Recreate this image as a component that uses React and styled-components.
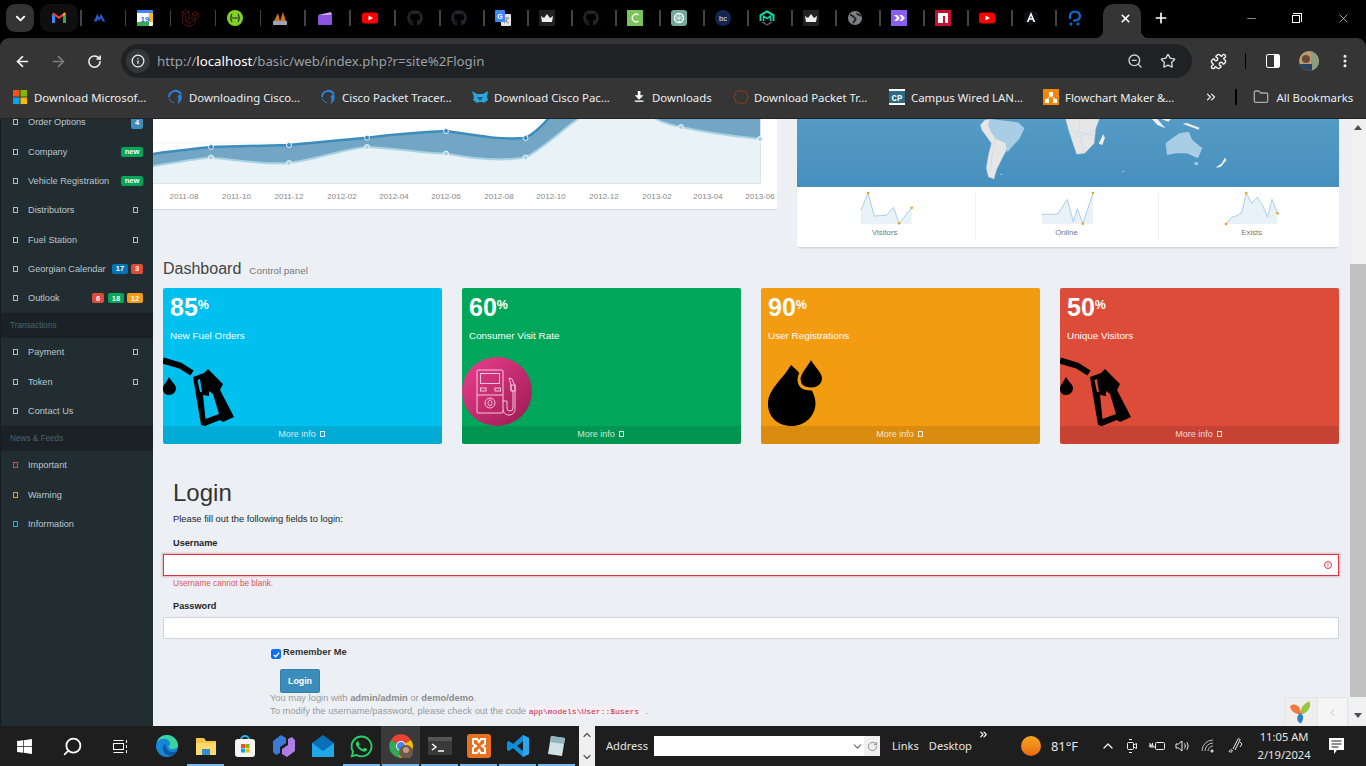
import React from "react";
import styled, { createGlobalStyle } from "styled-components";
import { ArrowLeft, ArrowRight, RotateCw, Info, ZoomOut, Star, Puzzle, MoreVertical, Minus, X, Plus, ChevronDown, ChevronUp, ChevronsRight, Folder, Search, ChevronLeft } from "lucide-react";
import { FaGithub, FaWhatsapp, FaWindows } from "react-icons/fa";
import { SiLaravel } from "react-icons/si";

const Global = createGlobalStyle`
  html, body { margin: 0; padding: 0; overflow: hidden; background: #000; }
  * { box-sizing: border-box; }
`;
const UI = `"Noto Sans", "Open Sans", sans-serif`;
const WEB = `"Liberation Sans", Arial, sans-serif`;

const Shell = styled.div`
  width: 1366px; height: 766px; display: grid; overflow: hidden;
  grid-template-columns: 1366px;
  grid-template-rows: 38px 40px 41px 607px 40px; background: #000;
`;
/* ---------- tab strip ---------- */
const TabStrip = styled.div`display: flex; align-items: flex-start; padding: 4px 0 0 6px; background: #000;`;
const TabSearch = styled.div`
  width: 28px; height: 28px; border-radius: 9px; background: #333; color: #fff;
  display: flex; align-items: center; justify-content: center;
`;
const PinnedTab = styled.div`
  position: relative; height: 28px; flex: none; width: ${p => p.$wide ? "44.9px" : "44px"};
  display: flex; align-items: center; justify-content: center;
  &::before { content: ""; position: absolute; left: 2px; top: 6px; width: 1.5px; height: 16px; background: #444; }
`;
const GmailPlate = styled.div`
  width: 38px; height: 28px; border-radius: 9px; background: #0f0f0f; margin-left: 6px;
  display: flex; align-items: center; justify-content: center;
`;
const ActiveTab = styled.div`
  position: relative; width: 38px; height: 34px; margin-left: 6px; border-radius: 10px 10px 0 0; background: #353535; color: #fff;
  display: flex; align-items: center; justify-content: center; padding: 0 0 6px 6px;
  &::before, &::after { content: ""; position: absolute; bottom: 0; width: 8px; height: 8px; }
  &::before { left: -8px; background: radial-gradient(circle at 0 0, #000 8px, #353535 8.5px); }
  &::after { right: -8px; background: radial-gradient(circle at 100% 0, #000 8px, #353535 8.5px); }
`;
const NewTab = styled.div`width: 40px; height: 28px; color: #fff; display: flex; align-items: center; justify-content: center;`;
const WindowControls = styled.div`display: flex; margin-left: auto; color: #fff;`;
const WinBtn = styled.div`width: 46px; height: 28px; display: flex; align-items: center; justify-content: center;`;
const RestoreGlyph = styled.div`
  position: relative; width: 8px; height: 8px; border: 1px solid #fff; margin-top: 2px; margin-right: 2px;
  &::after { content: ""; position: absolute; top: -3px; right: -3px; width: 8px; height: 8px; border-top: 1px solid #fff; border-right: 1px solid #fff; }
`;
/* ---------- toolbar ---------- */
const Toolbar = styled.div`display: flex; align-items: flex-start; padding: 6px 0 0 4px; background: #353535; border-radius: 9px 9px 0 0;`;
const NavBtn = styled.div`
  width: 36px; height: 34px; flex: none; display: flex; align-items: center; justify-content: center;
  color: ${p => p.$dim ? "#7c7c7c" : "#f1f1f1"};
`;
const Omnibox = styled.div`
  width: 1071px; height: 34px; margin: 0 8px 0 9px; border-radius: 17px; background: #202124;
  display: flex; align-items: center; padding: 0 6px 0 5px; flex: none;
`;
const InfoBubble = styled.div`width: 24px; height: 24px; border-radius: 50%; background: #35363a; color: #f1f1f1; display: flex; align-items: center; justify-content: center;`;
const Url = styled.div`margin-left: 7px; font: 13.25px ${UI}; color: #9aa0a6; white-space: nowrap; b { font-weight: 400; color: #fff; }`;
const OmniIcons = styled.div`margin-left: auto; display: flex; align-items: center; gap: 17px; color: #d7d7d7; padding-right: 10px;`;
const ToolSep = styled.div`width: 1px; height: 16px; background: #000; margin: 9px 9px 0 9px; flex: none;`;
const PanelGlyph = styled.div`
  width: 14px; height: 14px; border: 1.5px solid #fff; border-radius: 2px;
  background: linear-gradient(90deg, transparent 55%, #fff 55%);
`;
/* ---------- bookmarks ---------- */
const Bookmarks = styled.div`display: flex; align-items: center; background: #353535; padding: 0 0 2px 12px; border-bottom: 1px solid #222;`;
const Bookmark = styled.div`
  display: flex; align-items: center; flex: none; gap: ${p => p.$gap ?? 6}px; width: ${p => p.$w}px;
  font: 11.4px ${UI}; color: #eceff1; white-space: nowrap;
`;
const BookmarkIcon = styled.span`display: inline-flex; width: 16px; height: 16px; flex: none; align-items: center; justify-content: center; color: #fff;`;
const BarOverflow = styled.div`width: 31px; flex: none; margin-left: 11px; color: #eee; display: flex; align-items: center;`;
const BarSep = styled.div`width: 1.5px; height: 16px; background: #000; flex: none; margin-right: 16px;`;
/* ---------- page ---------- */
const Viewport = styled.div`display: flex; position: relative; overflow: hidden; background: #ecf0f5; font-family: ${WEB};`;
const Sidebar = styled.nav`width: 153px; flex: none; background: #222d32; border-left: 1px solid #161c20; overflow: hidden;`;
const SideList = styled.div`margin-top: -11.3px;`;
const SideRow = styled.div`
  height: 29.3px; display: flex; align-items: center; padding: 0 10px 0 12px; color: #b8c7ce; font-size: 9.2px; white-space: nowrap;
`;
const SideLabel = styled.span`margin-left: 10px; margin-right: auto;`;
const SideHead = styled.div`
  height: 25px; background: #1a2226; color: #4b646f; font-size: 8.2px; padding-left: 9px; display: flex; align-items: center;
`;
const Tofu = styled.span`
  display: inline-block; flex: none; width: 5px; height: 6px; border: 1px solid ${p => p.$c || "#aebcc3"};
  margin: ${p => p.$m || 0};
`;
const Badge = styled.span`
  flex: none; margin-left: ${p => p.$gap ?? 3}px; min-width: ${p => p.$w || 12}px; height: ${p => p.$h || 10}px; border-radius: 2px; background: ${p => p.$c};
  color: #fff; font-size: 7.5px; font-weight: 700; display: inline-flex; align-items: center; justify-content: center;
`;
const Main = styled.main`flex: 1; min-width: 0; display: flex; flex-direction: column;`;
const TopRow = styled.div`display: grid; grid-template-columns: 624px 542px; column-gap: 20px; height: 128px; align-items: start;`;
const ChartCard = styled.div`height: 91px; background: #fff; border-bottom: 1px solid #d2d6de; svg { display: block; }`;
const MapCard = styled.div`height: 129px; background: #fff; border-radius: 0 0 3px 3px; border-bottom: 1px solid #d2d6de; overflow: hidden; box-shadow: 0 1px 1px rgba(0,0,0,.05);`;
const MapArea = styled.div`height: 68px; background: linear-gradient(#549bc6, #478fbe); svg { display: block; }`;
const Sparks = styled.div`display: grid; grid-template-columns: 178.5px 183px 1fr; padding-top: 6px;`;
const SparkCell = styled.div`
  height: 47px; display: flex; flex-direction: column; align-items: center;
  padding: 0 ${p => p.$pr || 0}px 0 ${p => p.$pl || 0}px;
  border-right: ${p => p.$last ? "none" : "1px solid #f1f1f1"};
  svg { display: block; overflow: visible; margin-left: ${p => p.$off || 0}px; }
`;
const SparkLabel = styled.div`margin-top: 4px; font-size: 7.8px; color: #777; line-height: 9px;`;
const Heading = styled.div`height: 41px; padding: 13px 0 0 10px; display: flex; align-items: baseline; gap: 8px;`;
const Title = styled.h1`margin: 0; font-size: 16px; font-weight: 400; color: #444; line-height: 18px;`;
const Sub = styled.small`font-size: 9.9px; color: #777;`;
const Boxes = styled.div`display: grid; grid-template-columns: repeat(4, 279px); column-gap: 20px; margin-left: 10px;`;
const Box = styled.div`
  height: 156px; background: ${p => p.$c}; border-radius: 2px; color: #fff; display: flex; flex-direction: column;
`;
const BoxBody = styled.div`flex: 1; position: relative; padding: 5px 7px 0; overflow: hidden;`;
const BoxNum = styled.div`font-size: 25px; font-weight: 700; line-height: 28px; sup { font-size: 12.5px; font-weight: 700; vertical-align: 7px; line-height: 0; }`;
const BoxText = styled.div`font-size: 9.9px; margin-top: 9px; line-height: 12px;`;
const BoxIcon = styled.div`position: absolute; left: ${p => p.$l || 0}px; bottom: 0; line-height: 0;`;
const BoxFoot = styled.div`
  height: 18px; background: rgba(0,0,0,.1); color: rgba(255,255,255,.8); font-size: 9px; padding: 0 2px 2px 0;
  display: flex; align-items: center; justify-content: center; gap: 4px; border-radius: 0 0 2px 2px;
`;
const LoginWrap = styled.section`margin: 34px 11px 0 10px; color: #212529;`;
const LoginTitle = styled.h2`margin: 0 0 0 10px; font-size: 24px; font-weight: 400; line-height: 30px; color: #333;`;
const Lead = styled.p`margin: 5px 0 0 10px; font-size: 9.35px; line-height: 12px;`;
const FieldLabel = styled.label`display: block; margin: ${p => p.$top}px 0 5px 10px; font-size: 9.2px; font-weight: 700; line-height: 12px;`;
const Input = styled.div`
  position: relative; height: 22px; background: #fff; display: flex; align-items: center; justify-content: flex-end; padding-right: 6px;
  border: 1px solid ${p => p.$err ? "#dc3545" : "#ced4da"};
  box-shadow: ${p => p.$err ? "0 0 0 1.5px rgba(220,53,69,.22)" : "none"};
`;
const ErrDot = styled.span`
  width: 8px; height: 8px; border-radius: 50%; border: 1px solid #dc3545; color: #dc3545; font-size: 6px; font-weight: 700;
  display: flex; align-items: center; justify-content: center; line-height: 1;
`;
const ErrText = styled.div`margin: 3px 0 0 10px; font-size: 8.2px; line-height: 10px; color: #dc3545; opacity: .85;`;
const Remember = styled.div`margin: 8px 0 0 108px; display: flex; align-items: flex-start; gap: 2px; font-size: 9.3px; font-weight: 700; color: #333; line-height: 10px;`;
const Check = styled.span`
  width: 10px; height: 10px; margin-top: 2px; border-radius: 2px; background: #0d6efd; color: #fff; display: inline-flex; align-items: center; justify-content: center; flex: none;
`;
const LoginBtn = styled.div`
  margin: 10px 0 0 117px; width: 40px; height: 24px; background: #3c8dbc; border: 1px solid #367fa9; border-radius: 2px; color: #fff;
  font-size: 8.8px; font-weight: 700; display: flex; align-items: center; justify-content: center;
`;
const Hint = styled.div`margin: -1px 0 0 107px; color: #999; font-size: 9.35px; line-height: 13px; b { font-weight: 700; color: #8b8b8b; }`;
const Code = styled.code`
  background: #f5eef2; color: #c7254e; font: 8px "Liberation Mono", monospace; padding: 1px 2px; border-radius: 2px; margin: 0 2px 0 -2px;
`;
const ScrollBar = styled.div`
  width: 16px; flex: none; background: #f1f1f1; display: flex; flex-direction: column; align-items: center; position: relative;
`;
const ArrowUp = styled.div`margin-top: 6px; width: 0; height: 0; border: 4px solid transparent; border-top: 0; border-bottom: 5px solid #505050;`;
const Thumb = styled.div`width: 16px; height: 433px; margin-top: 134px; background: #c1c1c1;`;
const ArrowDown = styled.div`margin-top: 16px; width: 0; height: 0; border: 4px solid transparent; border-bottom: 0; border-top: 5px solid #505050;`;
const YiiBar = styled.div`
  position: absolute; right: 18px; bottom: 0; height: 29px; display: flex; background: #f5f5f5; border: 1px solid #e4e4e4; border-bottom: 0;
`;
const YiiLogo = styled.div`width: 32px; display: flex; align-items: center; justify-content: center; background: #eee;`;
const YiiToggle = styled.div`width: 30px; display: flex; align-items: center; justify-content: center; color: #bbb; border-left: 1px solid #e4e4e4;`;
/* ---------- taskbar ---------- */
const Taskbar = styled.div`display: flex; align-items: center; background: #1e1e1e; color: #e6e6e6; font-family: ${UI};`;
const TaskBtn = styled.div`width: 48px; height: 40px; flex: none; display: flex; align-items: center; justify-content: center; color: #fff;`;
const AppIcons = styled.div`display: flex; margin-left: 3px;`;
const AppIcon = styled.div`
  width: 39px; height: 40px; display: flex; align-items: center; justify-content: center; position: relative; flex: none;
  background: ${p => p.$active ? "#3a3a3a" : "transparent"};
  &::after { content: ${p => p.$run ? '""' : "none"}; position: absolute; left: 1px; right: 1px; bottom: 0; height: 2px; background: #76b9ed; }
`;
const Scroller = styled.div`width: 16px; height: 40px; margin-left: 3px; background: #f0f0f0; color: #555; display: flex; flex-direction: column; align-items: center; justify-content: space-between; padding: 3px 0; flex: none;`;
const AddrLabel = styled.div`margin: 0 0 2px 11px; font-size: 11.1px; width: 48px; flex: none;`;
const AddrInput = styled.div`width: 210px; height: 20px; background: #fff; color: #666; display: flex; align-items: center; justify-content: flex-end; flex: none;`;
const AddrGo = styled.div`width: 16px; height: 20px; background: #f0f0f0; color: #888; display: flex; align-items: center; justify-content: center; flex: none;`;
const BarLink = styled.div`font-size: 11.1px; flex: none; margin: 0 0 2px ${p => p.$l}px;`;
const Chevrons = styled.div`align-self: flex-start; margin: 3px 0 0 6px; color: #fff; flex: none; line-height: 0;`;
const Sun = styled.div`width: 20px; height: 20px; margin-left: 32px; border-radius: 50%; background: linear-gradient(#f5a623, #ec6a10); flex: none;`;
const Temp = styled.div`margin-left: 10px; font-size: 13px; flex: none;`;
const Tray = styled.div`display: flex; align-items: center; margin-left: 22px; color: #eee; gap: 8px;`;
const Clock = styled.div`margin-left: 8px; width: 64px; text-align: center; font-size: 11.2px; line-height: 18px; flex: none;`;
const Notif = styled.div`margin-left: 12px; color: #fff; line-height: 0;`;

/* ---------- small drawings ---------- */
const Ic = ({ s = 16, v = "0 0 16 16", children }) => <svg width={s} height={s} viewBox={v}>{children}</svg>;
const Gmail = () => <Ic><path d="M1 13V4l3 2v7z" fill="#4285f4"/><path d="M15 13V4l-3 2v7z" fill="#34a853"/><path d="M1 4l7 5 7-5-1.5-1.5L8 6.5 2.5 2.5z" fill="#ea4335"/><path d="M12 6l3-2-1.500-1.500L12 3.600z" fill="#fbbc04"/></Ic>;
const favs = [
  <Ic key="a" s={14}><path d="M1 12L5 3l2 5 2-5 5 9h-3L9 8l-2 4-1-3-2 3z" fill="#2b5bd7"/></Ic>,
  <Ic key="b"><rect width="16" height="16" rx="1" fill="#fff"/><rect y="12" width="12" height="4" fill="#34a853"/><rect x="12" width="4" height="12" fill="#fbbc04"/><rect width="16" height="3" fill="#4285f4"/><text x="8" y="11.500" fontSize="8" fontWeight="700" fontFamily="Liberation Sans" textAnchor="middle" fill="#1a73e8">19</text></Ic>,
  <SiLaravel key="c" size={17} color="#7a1a18"/>,
  <Ic key="d"><circle cx="8" cy="8" r="8" fill="#7ed321"/><path d="M5 4C3.500 6 3.500 10 5 12M11 4c1.500 2 1.500 6 0 8M5 8h6" stroke="#224" fill="none" strokeWidth="1.200"/></Ic>,
  <Ic key="e"><path d="M2 11L6 3l2 8zM8 11l3-9 3 9z" fill="#c8742a"/><rect x="1" y="11" width="14" height="4" fill="#9aa5b5"/></Ic>,
  <Ic key="f"><path d="M1 5l13-3 1 3z" fill="#c9a7f2"/><rect x="1" y="5" width="14" height="10" rx="1" fill="#8c52e0"/></Ic>,
  <Ic key="g"><rect y="2.500" width="16" height="11" rx="3" fill="#f00"/><path d="M6.500 5.500L11 8l-4.500 2.500z" fill="#fff"/></Ic>,
  <FaGithub key="h" size={16} color="#22262b"/>,
  <FaGithub key="i" size={16} color="#22262b"/>,
  <Ic key="j"><rect x="6" y="4" width="10" height="12" rx="1" fill="#e4e4e4"/><path d="M10 8h4M12 8c0 3-1 4-3 5M10.500 10c1 2 2 2.500 3.500 3" stroke="#777" fill="none" strokeWidth=".9"/><rect width="10" height="12" rx="1" fill="#4285f4"/><text x="5" y="9" fontSize="7" fontWeight="700" fontFamily="Liberation Sans" textAnchor="middle" fill="#fff">G</text></Ic>,
  <Ic key="k"><rect width="16" height="16" fill="#222"/><path d="M2 6l3 2 3-4 3 4 3-2-1 6H3z" fill="#eee"/></Ic>,
  <FaGithub key="l" size={16} color="#22262b"/>,
  <Ic key="m"><rect width="16" height="16" fill="#7cc35c"/><path d="M11.500 5A3.800 3.800 0 1 0 11.500 11" stroke="#fff" fill="none" strokeWidth="1.300"/></Ic>,
  <Ic key="n"><rect width="16" height="16" rx="3" fill="#74aa9c"/><circle cx="8" cy="8" r="4.500" stroke="#fff" fill="none" strokeWidth="1.300"/><path d="M8 3.500v9M4 6l8 4M12 6l-8 4" stroke="#fff" strokeWidth=".7"/></Ic>,
  <Ic key="o"><circle cx="8" cy="8" r="8" fill="#12264f"/><text x="8" y="10.500" fontSize="7.500" fontFamily="Liberation Sans" textAnchor="middle" fill="#dfe7f5">bc</text></Ic>,
  <Ic key="p"><path d="M1.500 11V5L8 1.500 14.500 5v6" stroke="#10d8a8" strokeWidth="2" fill="none"/><path d="M4.500 11V6L8 8.500 11.500 6v5" stroke="#10d8a8" strokeWidth="1.500" fill="none"/><path d="M3 12l5 3 5-3" stroke="#556" strokeWidth="1.500" fill="none"/></Ic>,
  <Ic key="q"><rect width="16" height="16" fill="#222"/><path d="M2 6l3 2 3-4 3 4 3-2-1 6H3z" fill="#eee"/></Ic>,
  <Ic key="r"><circle cx="8" cy="8" r="7" fill="#7d8084"/><path d="M3 5c3 0 3 2 5 3s-1 3-2 5M10 3c0 2 3 2 4 3" stroke="#222" strokeWidth="1.800" fill="none"/></Ic>,
  <Ic key="s"><rect width="16" height="16" fill="#8b5cf6"/><path d="M3 5l3 3-3 3h3l3-3-3-3zM8 5l3 3-3 3h3l3-3-3-3z" fill="#fff"/></Ic>,
  <Ic key="t"><rect width="16" height="16" fill="#c8102e"/><path d="M3 3h10v10h-3V6H8v7H3z" fill="#fff"/></Ic>,
  <Ic key="u"><rect y="2.500" width="16" height="11" rx="3" fill="#f00"/><path d="M6.500 5.500L11 8l-4.500 2.500z" fill="#fff"/></Ic>,
  <Ic key="v"><path d="M8 0l7 3-1 9-6 4-6-4-1-9z" fill="#0d1117"/><path d="M8 2L3.800 12h1.800l.9-2.300h3l.9 2.300h1.800zM7.100 8.300L8 5.800l.9 2.500z" fill="#fff"/></Ic>,
  <Ic key="w"><path d="M3 9V6a5 4.500 0 1 1 5 4.500H6" stroke="#0a6fd6" strokeWidth="2.200" fill="none"/><circle cx="4" cy="14" r="1.500" fill="#0a6fd6"/><circle cx="11" cy="14" r="1.500" fill="#0a6fd6"/></Ic>,
];
const WinTiles = () => <Ic s={15}><rect width="7" height="7" fill="#f25022"/><rect x="8" width="7" height="7" fill="#7fba00"/><rect y="8" width="7" height="7" fill="#00a4ef"/><rect x="8" y="8" width="7" height="7" fill="#ffb900"/></Ic>;
const CiscoSwirl = () => <Ic><path d="M2 8a6.500 6.500 0 0 1 12 -3" stroke="#2f7fd6" strokeWidth="2" fill="none"/><path d="M14 5c2 4 0 8-3.500 10 1-3 1.500-5 0-8z" fill="#2f7fd6"/><path d="M2 9c1 3 3 4 5 5" stroke="#2f7fd6" strokeWidth="1" fill="none"/></Ic>;
const Fox = () => <Ic><path d="M0 2l5 3h6l5-3-1 6 1 3-4 3-2-1H7l-2 1-4-3 1-3z" fill="#2ea4d8"/><path d="M5 8l3 4 3-4" fill="#0a5f88"/></Ic>;
const DownloadGlyph = () => <Ic s={14}><path d="M5.500 1h3v5H12L7 11 2 6h3.500z" fill="#fff"/><rect x="2" y="12" width="10" height="1.500" fill="#fff"/></Ic>;
const Hexa = () => <Ic><path d="M8 1l2.500 1.500L13.500 3l.5 3 1.500 2-1.500 2-.5 3-3 .5L8 15l-2.500-1.500L2.500 13 2 10 .5 8 2 6l.5-3 3-.5z" stroke="#7a3d1c" fill="none" strokeWidth="1.200"/></Ic>;
const CP = () => <Ic><rect width="16" height="16" fill="#fff"/><rect y="2" width="16" height="12" fill="#2c6a86"/><text x="8" y="12" fontSize="9" fontWeight="700" fontFamily="Liberation Mono" textAnchor="middle" fill="#fff">CP</text></Ic>;
const Flow = () => <Ic><rect width="16" height="16" fill="#f08705"/><rect x="6" y="3" width="4" height="4" fill="#fff"/><rect x="2" y="10" width="4" height="4" fill="#fff"/><rect x="10" y="10" width="4" height="4" fill="#fff"/><path d="M8 7L4 10M8 7l4 3" stroke="#fff"/></Ic>;

const upper = "M0 35 C20 32 40 30 58 28 L136 26 C165 23 190 21 214 18.700 C245 15 270 13 293 12 C320 16 345 21 372.500 19 C382 14 388 8 395 0 L420 -30 L607 -30";
const lower = "M0 47 C20 44 40 40 58 38.500 C85 41 110 46 136 44 C165 40 190 30 214 28 C245 29 270 35 293 34.500 C320 40 350 42 372.500 38.500 C392 28 410 10 425 0 C445 -20 480 -20 503 0 C510 4 518 6 528 8 C555 14 580 17 607 20";
const months = [["2011-08", 31], ["2011-10", 83.500], ["2011-12", 136], ["2012-02", 189], ["2012-04", 241], ["2012-06", 293], ["2012-08", 346], ["2012-10", 398], ["2012-12", 451], ["2013-02", 504], ["2013-04", 555], ["2013-06", 607]];

const Chart = () => (
  <svg width="624" height="90" viewBox="0 0 624 90">
    <line x1="0" x2="607" y1="24" y2="24" stroke="#f2f2f2"/>
    <path d={`${upper} L607 64 L0 64Z`} fill="#73a6c5"/>
    <path d={upper} fill="none" stroke="#3c8dbc" strokeWidth="2.500"/>
    <path d={`${lower} L607 64 L0 64Z`} fill="#e9f2f6"/>
    <path d={lower} fill="none" stroke="#a9d3e4" strokeWidth="2"/>
    <path d="M0 64.500H607.500V0" fill="none" stroke="#d9e5ea"/>
    {[[58, 28], [136, 26], [214, 18.700], [293, 12], [372.500, 19]].map(([x, y]) => <circle key={x} cx={x} cy={y} r="2.500" fill="#3c8dbc" stroke="#fff" strokeWidth=".8"/>)}
    {[[58, 38.500], [136, 44], [214, 28], [293, 34.500], [372.500, 38.500], [528, 8], [607, 20]].map(([x, y]) => <circle key={x} cx={x} cy={y} r="2.500" fill="#a9d3e4" stroke="#fff" strokeWidth=".8"/>)}
    {months.map(([t, x]) => <text key={t} x={x} y="80" fontSize="8" fill="#888" fontFamily="Liberation Sans" textAnchor="middle">{t}</text>)}
  </svg>
);
const WorldMap = () => (
  <svg width="542" height="68" viewBox="19 12 1475 204" preserveAspectRatio="none">
    <path d="M518 30L530 15 545 12 540 30 548 50 560 70 585 82 592 100 578 128 562 165 555 192 540 186 534 160 540 120 548 85 532 60 522 45Z" fill="#e6e6e6" stroke="#a9cde3"/>
    <path d="M545 12L620 22 638 40 624 72 604 95 592 112 585 82 560 70 548 50 540 30Z" fill="#a9cde4"/>
    <path d="M560 72L550 120 545 170M585 100L562 120" stroke="#a9cde3" fill="none"/>
    <path d="M750 12L842 12 832 40 828 85 802 115 780 118 770 85 758 45Z" fill="#e6e6e6" stroke="#a9cde3"/>
    <path d="M790 12L785 50 770 70M832 45L790 65 800 112M758 45L828 62" stroke="#a9cde3" fill="none"/>
    <path d="M852 58L857 68 850 90 840 86Z" fill="#eee"/>
    <path d="M1022 85L1040 70 1060 55 1085 50 1095 75 1122 100 1110 130 1080 115 1050 115 1026 120Z" fill="#a9cde4"/>
    <path d="M1100 142h10v8h-8z" fill="#a9cde4"/>
    <path d="M1158 158L1175 145 1183 128 1188 135 1172 156Z" fill="#f0f0f0"/>
    <path d="M985 12L1000 30 1022 40 1012 28 1000 12ZM1010 12L1030 20 1036 12ZM1068 26L1112 44 1114 38 1080 24Z" fill="#eee"/>
    <circle cx="907" cy="169" r="2" fill="#eee"/><circle cx="575" cy="178" r="2" fill="#eee"/>
  </svg>
);
const Spark = ({ pts, dots }) => {
  const line = pts.map(p => p.join(",")).join(" ");
  return (
    <svg width="52" height="31" viewBox="0 0 52 31">
      <polygon points={`0,31 ${line} ${pts[pts.length - 1][0]},31`} fill="#e8f2f8"/>
      <polyline points={line} fill="none" stroke="#a9cfe6" strokeWidth="1"/>
      {dots.map(i => <circle key={i} cx={pts[i][0]} cy={pts[i][1]} r="1.300" fill="#f39c12"/>)}
    </svg>
  );
};
const Nozzle = () => (
  <svg width="72" height="69" viewBox="0 0 72 69">
    <path d="M0 3.500L17 8.500 29 16" fill="none" stroke="#000" strokeWidth="6"/>
    <path fillRule="evenodd" d="M30 20L41 16 45 12 60 27 57 33 71 60 60 65 57 63 42 69 38 68ZM34.500 23L37 35 39 35 37 22ZM40 38L42.500 62 56 57 50 37 46 34 46 39Z" fill="#000"/>
    <path d="M6 20C3 26 0 28 0 32 0 36 3 38 6 38 10 38 13 35 13 31 13 28 9 25 6 20Z" fill="#000"/>
  </svg>
);
const Drops = ({ bg }) => (
  <svg width="58" height="69" viewBox="0 0 58 69">
    <path d="M23 8C15 22 0 32 0 47 0 60 10 69 23.500 69 37 69 47.500 59 47.500 46 47.500 34 35 18 23 8Z" fill="#000"/>
    <path d="M43 0C39 9 31 15 31 22 31 29 36 32 43 32 50 32 55.500 28 55.500 21 55.500 14 47 9 43 0Z" fill="#000" stroke={bg} strokeWidth="3"/>
  </svg>
);
const PumpBadge = () => (
  <svg width="70" height="69" viewBox="0 0 70 69">
    <defs><linearGradient id="pk" x1="0" y1="0" x2="1" y2="1"><stop offset="0" stopColor="#ee3f90"/><stop offset="1" stopColor="#9a1a50"/></linearGradient></defs>
    <ellipse cx="35" cy="34.500" rx="35" ry="34.500" fill="url(#pk)"/>
    <g fill="none" stroke="#f7c6dc" strokeWidth="1">
      <rect x="15" y="13" width="26" height="43" rx="1"/><rect x="18.500" y="16.500" width="19" height="10"/>
      <rect x="18.500" y="31" width="5.500" height="3"/><rect x="33" y="31" width="5.500" height="3"/><path d="M15 38h26"/>
      <circle cx="28" cy="46" r="5"/><path d="M28 42.500c-1.500 2-2 3-2 4a2 2 0 0 0 4 0c0-1-.5-2-2-4z"/>
      <path d="M41 44h4v7a3 3 0 0 0 6 0V34l-2-2v-4l-2-7 3 1 3 7v22a6 6 0 0 1-12 2"/><rect x="49" y="28" width="4" height="6"/>
    </g>
  </svg>
);
const YiiMark = () => <Ic s={24} v="0 0 20 20"><path d="M1 5c4-3 9 0 9 7-5 0-9-3-9-7z" fill="#f0783c"/><path d="M10 12c-1-5 2-9 7-11 2 4-1 10-7 11z" fill="#9bc53d"/><path d="M9 11c3 1 4 4 1 8.500-4-1-4-6-1-8.500z" fill="#2d7ec4"/></Ic>;

const Edge = () => <Ic s={24} v="0 0 24 24"><circle cx="12" cy="12" r="11" fill="#1686d9"/><path d="M23 12c0-6-5-11-11-11C7 1 3 4 2 8c2-3 6-4 9-3 4 1 5 5 3 7-1 1 0 3 3 3 3 0 6-1 6-3z" fill="#38d39f"/><path d="M10 10c-3 2-3 8 2 11 5 2 9-1 10-4-3 2-9 1-10-2-1-2-1-4-2-5z" fill="#0c59a4"/></Ic>;
const FolderApp = () => <Ic s={24} v="0 0 24 24"><path d="M2 4h8l2 3h10v14H2z" fill="#f6c445"/><path d="M2 9h20v12H2z" fill="#fbd96a"/><path d="M8 15h8v6H8z" fill="#2f8ed6"/></Ic>;
const Store = () => <Ic s={24} v="0 0 24 24"><path d="M8 6a4 4 0 0 1 8 0" stroke="#2fb0e8" strokeWidth="2" fill="none"/><rect x="2" y="5" width="20" height="18" rx="3" fill="#f5f5f5"/><rect x="8" y="10" width="4" height="4" fill="#f25022"/><rect x="12.500" y="10" width="4" height="4" fill="#7fba00"/><rect x="8" y="14.500" width="4" height="4" fill="#00a4ef"/><rect x="12.500" y="14.500" width="4" height="4" fill="#ffb900"/></Ic>;
const Copilot = () => <Ic s={24} v="0 0 24 24"><path d="M9 1l5 3v5L8 13v6l-4 2-3-3V7z" fill="#3a7bd5"/><path d="M15 23l-5-3v-5l6-4V5l4-2 3 3v11z" fill="#b07ce8"/></Ic>;
const Mail = () => <Ic s={24} v="0 0 24 24"><path d="M1 9L12 1l11 8v14H1z" fill="#0b6fb8"/><path d="M1 9l11 8 11-8v14H1z" fill="#1fa7e8"/></Ic>;
const ChromeApp = () => <Ic s={24} v="0 0 24 24"><path d="M12 12L2 6a11.500 11.500 0 0 1 20 0z" fill="#e94235"/><path d="M12 12L2 6a11.500 11.500 0 0 0 8 17.500z" fill="#34a853"/><path d="M12 12L22 6a11.500 11.500 0 0 1-12 17.500z" fill="#fbbc04"/><circle cx="12" cy="12" r="5" fill="#fff"/><circle cx="12" cy="12" r="4" fill="#4285f4"/><circle cx="17" cy="18" r="7" fill="#6d5a4a"/><circle cx="17" cy="16" r="3" fill="#c99b7a"/></Ic>;
const Term = () => <Ic s={24} v="0 0 24 24"><rect y="3" width="24" height="18" rx="1" fill="#3a3a3a"/><rect y="3" width="24" height="4" fill="#555"/><path d="M4 10l4 3-4 3" stroke="#fff" strokeWidth="1.500" fill="none"/><path d="M10 17h6" stroke="#fff" strokeWidth="1.500"/></Ic>;
const Xampp = () => <Ic s={24} v="0 0 24 24"><rect width="24" height="24" rx="3" fill="#e8701f"/><path d="M6 5h4l2 3 2-3h4v5l-3 2 3 2v5h-4l-2-3-2 3H6v-5l3-2-3-2z" fill="none" stroke="#fff" strokeWidth="2"/></Ic>;
const VSCode = () => <Ic s={24} v="0 0 24 24"><path d="M17 1l6 3v16l-6 3L7 14l-4 3-2-1V8l2-1 4 3z" fill="#0e8fdc"/><path d="M17 7l-6 5 6 5z" fill="#1e1e1e"/><path d="M17 1l6 3v16l-6 3z" fill="#2aa6ef"/></Ic>;
const Notes = () => <Ic s={24} v="0 0 24 24"><path d="M6 2l14 2-3 18-14-2z" fill="#cfe3e6"/><path d="M6 2l14 2-1 6-14-2z" fill="#8fb6bd"/></Ic>;

const Pill = ({ c, gap, w, h, children }) => <Badge $c={c} $gap={gap} $w={w} $h={h}>{children}</Badge>;

const menu1 = [
  ["Order Options", <Pill key="1" c="#3c8dbc" w={12} h={14}>4</Pill>],
  ["Company", <Pill key="1" c="#00a65a" w={22}>new</Pill>],
  ["Vehicle Registration", <Pill key="1" c="#00a65a" w={22}>new</Pill>],
  ["Distributors", <Tofu key="1" $m="0 5px 0 0"/>],
  ["Fuel Station", <Tofu key="1" $m="0 5px 0 0"/>],
  ["Georgian Calendar", [<Pill key="1" c="#0073b7" w={16}>17</Pill>, <Pill key="2" c="#dd4b39">3</Pill>]],
  ["Outlook", [<Pill key="1" c="#dd4b39">6</Pill>, <Pill key="2" c="#00a65a" w={16} gap={4}>18</Pill>, <Pill key="3" c="#f39c12" w={16} gap={3}>12</Pill>]],
];
const menu2 = [["Payment", <Tofu key="1" $m="0 5px 0 0"/>], ["Token", <Tofu key="1" $m="0 5px 0 0"/>], ["Contact Us", null]];
const menu3 = [["Important", "#dd4b39"], ["Warning", "#f39c12"], ["Information", "#00c0ef"]];
const Row = ({ label, color, children }) => <SideRow><Tofu $c={color}/><SideLabel>{label}</SideLabel>{children}</SideRow>;

const boxes = [
  { c: "#00c0ef", n: "85", t: "New Fuel Orders", icon: <Nozzle/> },
  { c: "#00a65a", n: "60", t: "Consumer Visit Rate", icon: <PumpBadge/> },
  { c: "#f39c12", n: "90", t: "User Registrations", icon: <Drops bg="#f39c12"/>, l: 7 },
  { c: "#dd4b39", n: "50", t: "Unique Visitors", icon: <Nozzle/> },
];
const marks = [
  ["Download Microsof…", <WinTiles key="i"/>, 155], ["Downloading Cisco…", <CiscoSwirl key="i"/>, 153], ["Cisco Packet Tracer…", <CiscoSwirl key="i"/>, 152],
  ["Download Cisco Pac…", <Fox key="i"/>, 160], ["Downloads", <DownloadGlyph key="i"/>, 101, 4], ["Download Packet Tr…", <Hexa key="i"/>, 156, 5],
  ["Campus Wired LAN…", <CP key="i"/>, 154], ["Flowchart Maker &…", <Flow key="i"/>, 150],
];

export default function App() {
  return (
    <Shell>
      <Global/>
      <TabStrip>
        <TabSearch><ChevronDown size={15} strokeWidth={3}/></TabSearch>
        <GmailPlate><Gmail/></GmailPlate>
        {favs.map((f, i) => <PinnedTab key={i} $wide={i < 8}>{f}</PinnedTab>)}
        <ActiveTab><X size={13} strokeWidth={3}/></ActiveTab>
        <NewTab><Plus size={16} strokeWidth={2.5}/></NewTab>
        <WindowControls>
          <WinBtn><Minus size={13} strokeWidth={1}/></WinBtn>
          <WinBtn><RestoreGlyph/></WinBtn>
          <WinBtn><X size={15} strokeWidth={1}/></WinBtn>
        </WindowControls>
      </TabStrip>
      <Toolbar>
        <NavBtn><ArrowLeft size={17} strokeWidth={2.4}/></NavBtn>
        <NavBtn $dim><ArrowRight size={17} strokeWidth={2.4}/></NavBtn>
        <NavBtn><RotateCw size={15} strokeWidth={2.4}/></NavBtn>
        <Omnibox>
          <InfoBubble><Info size={14} strokeWidth={2.2}/></InfoBubble>
          <Url>http://<b>localhost</b>/basic/web/index.php?r=site%2Flogin</Url>
          <OmniIcons><ZoomOut size={16}/><Star size={16}/></OmniIcons>
        </Omnibox>
        <NavBtn><Puzzle size={17} strokeWidth={2}/></NavBtn>
        <ToolSep/>
        <NavBtn><PanelGlyph/></NavBtn>
        <NavBtn>
          <svg width="20" height="20" viewBox="0 0 20 20"><defs><clipPath id="av"><circle cx="10" cy="10" r="10"/></clipPath></defs><g clipPath="url(#av)"><rect width="20" height="20" fill="#b99a78"/><rect x="12" width="8" height="20" fill="#8aa07d"/><circle cx="7" cy="8" r="4" fill="#6b4a35"/><rect x="1" y="13" width="12" height="7" fill="#2b4260"/></g></svg>
        </NavBtn>
        <NavBtn><MoreVertical size={16} strokeWidth={2.6}/></NavBtn>
      </Toolbar>
      <Bookmarks>
        {marks.map(([t, icon, w, g]) => <Bookmark key={t} $w={w} $gap={g}><BookmarkIcon>{icon}</BookmarkIcon>{t}</Bookmark>)}
        <BarOverflow><ChevronsRight size={14} strokeWidth={2.2}/></BarOverflow>
        <BarSep/>
        <Bookmark $w={98} $gap={8}><BookmarkIcon><Folder size={16} color="#a8a8a8"/></BookmarkIcon>All Bookmarks</Bookmark>
      </Bookmarks>
      <Viewport>
        <Sidebar>
          <SideList>
            {menu1.map(([l, r]) => <Row key={l} label={l}>{r}</Row>)}
            <SideHead>Transactions</SideHead>
            {menu2.map(([l, r]) => <Row key={l} label={l}>{r}</Row>)}
            <SideHead>News &amp; Feeds</SideHead>
            {menu3.map(([l, c]) => <Row key={l} label={l} color={c}/>)}
          </SideList>
        </Sidebar>
        <Main>
          <TopRow>
            <ChartCard><Chart/></ChartCard>
            <MapCard>
              <MapArea><WorldMap/></MapArea>
              <Sparks>
                <SparkCell $pr={2} $off={4}><Spark dots={[1, 5, 6]} pts={[[0, 17], [7, 0], [13.200, 23], [25.700, 22.300], [32.400, 14.300], [38.200, 30.300], [50.700, 14.700]]}/><SparkLabel>Visitors</SparkLabel></SparkCell>
                <SparkCell $off={3}><Spark dots={[5, 6]} pts={[[0, 21.300], [15.400, 21.300], [25.400, 6.300], [31.300, 29], [35.300, 15.700], [40.800, 30.700], [51, 0]]}/><SparkLabel>Online</SparkLabel></SparkCell>
                <SparkCell $last $pl={6}><Spark dots={[0, 4, 10]} pts={[[0, 31], [5.500, 24.300], [11, 22.700], [15.800, 19.700], [20.200, 0], [25.700, 10.300], [31.200, 4.300], [36.800, 12.700], [41.500, 24.300], [46, 6.300], [51.500, 20.300]]}/><SparkLabel>Exists</SparkLabel></SparkCell>
              </Sparks>
            </MapCard>
          </TopRow>
          <Heading><Title>Dashboard</Title><Sub>Control panel</Sub></Heading>
          <Boxes>
            {boxes.map(b => (
              <Box key={b.n} $c={b.c}>
                <BoxBody>
                  <BoxNum>{b.n}<sup>%</sup></BoxNum>
                  <BoxText>{b.t}</BoxText>
                  <BoxIcon $l={b.l}>{b.icon}</BoxIcon>
                </BoxBody>
                <BoxFoot>More info <Tofu $c="rgba(255,255,255,.85)"/></BoxFoot>
              </Box>
            ))}
          </Boxes>
          <LoginWrap>
            <LoginTitle>Login</LoginTitle>
            <Lead>Please fill out the following fields to login:</Lead>
            <FieldLabel $top={12}>Username</FieldLabel>
            <Input $err><ErrDot>!</ErrDot></Input>
            <ErrText>Username cannot be blank.</ErrText>
            <FieldLabel $top={11}>Password</FieldLabel>
            <Input/>
            <Remember>
              <Check><svg width="7" height="7" viewBox="0 0 8 8"><path d="M1 4.500L3 6.500 7 2" stroke="#fff" strokeWidth="1.500" fill="none"/></svg></Check>
              Remember Me
            </Remember>
            <LoginBtn>Login</LoginBtn>
            <Hint>
              You may login with <b>admin/admin</b> or <b>demo/demo</b>.<br/>
              To modify the username/password, please check out the code <Code>app\models\User::$users</Code> .
            </Hint>
          </LoginWrap>
        </Main>
        <ScrollBar><ArrowUp/><Thumb/><ArrowDown/></ScrollBar>
        <YiiBar><YiiLogo><YiiMark/></YiiLogo><YiiToggle><ChevronLeft size={11}/></YiiToggle></YiiBar>
      </Viewport>
      <Taskbar>
        <TaskBtn><FaWindows size={17}/></TaskBtn>
        <TaskBtn><Search size={21} strokeWidth={2} style={{ transform: "scaleX(-1)" }}/></TaskBtn>
        <TaskBtn>
          <svg width="17" height="17" viewBox="0 0 17 17" fill="none" stroke="#fff"><rect x="1.500" y="5.500" width="10" height="6"/><path d="M1.500 2.500h10M1.500 14.500h10M14.500 2v3M14.500 7v3M14.500 12v3"/></svg>
        </TaskBtn>
        <AppIcons>
          <AppIcon><Edge/></AppIcon>
          <AppIcon $run><FolderApp/></AppIcon>
          <AppIcon><Store/></AppIcon>
          <AppIcon><Copilot/></AppIcon>
          <AppIcon><Mail/></AppIcon>
          <AppIcon $run><FaWhatsapp size={25} color="#25d366"/></AppIcon>
          <AppIcon $run $active><ChromeApp/></AppIcon>
          <AppIcon $run><Term/></AppIcon>
          <AppIcon $run><Xampp/></AppIcon>
          <AppIcon $run><VSCode/></AppIcon>
          <AppIcon $run><Notes/></AppIcon>
        </AppIcons>
        <Scroller><ChevronUp size={12} strokeWidth={2.5}/><ChevronDown size={12} strokeWidth={2.5}/></Scroller>
        <AddrLabel>Address</AddrLabel>
        <AddrInput><ChevronDown size={13}/></AddrInput>
        <AddrGo><RotateCw size={11}/></AddrGo>
        <BarLink $l={12}>Links</BarLink>
        <BarLink $l={10}>Desktop</BarLink>
        <Chevrons><ChevronsRight size={11} strokeWidth={2.5}/></Chevrons>
        <Sun/>
        <Temp>81°F</Temp>
        <Tray>
          <ChevronUp size={16}/>
          <svg width="16" height="16" viewBox="0 0 16 16" fill="none" stroke="#eee"><rect x="3.500" y="4.500" width="6" height="7" rx="1"/><path d="M9.500 7l3-1.500v5l-3-1.500M5 1.500h3M5 14.500h3"/></svg>
          <svg width="18" height="16" viewBox="0 0 18 16" fill="none" stroke="#eee"><rect x="7.500" y="4.500" width="9" height="7" rx="1"/><path d="M1 8h3M2 5v2M4.500 5v2M2 7h3v2H2zM5 9h2"/></svg>
          <svg width="16" height="16" viewBox="0 0 16 16" fill="none" stroke="#eee"><path d="M2 6h2.500L8 3v10L4.500 10H2zM10.500 5.500c1 1.500 1 3.500 0 5M12.500 4c2 2 2 6 0 8"/></svg>
          <svg width="18" height="16" viewBox="0 0 18 16" fill="none" stroke="#bbb" style={{ marginLeft: 2 }}><path d="M2 13A11 11 0 0 1 13 2M5 13A8 8 0 0 1 13 5M8 13a5 5 0 0 1 5-5"/><circle cx="12" cy="13" r="1.200" fill="#eee"/></svg>
          <svg width="18" height="18" viewBox="0 0 18 18" fill="none" stroke="#eee"><path d="M3 15c1-2 2-3 3-2s-1 3-2 2M7 12L12 2c1-1 2 0 2 1L9 13M14 5l2 2-2 3"/></svg>
        </Tray>
        <Clock>11:05 AM<br/>2/19/2024</Clock>
        <Notif>
          <svg width="17" height="18" viewBox="0 0 17 18"><path d="M1 1h15v12H9l-3 4v-4H1z" fill="#fff"/><path d="M3.500 4h10M3.500 7h10M3.500 10h7" stroke="#1e1e1e" strokeWidth="1.200"/></svg>
        </Notif>
      </Taskbar>
    </Shell>
  );
}
